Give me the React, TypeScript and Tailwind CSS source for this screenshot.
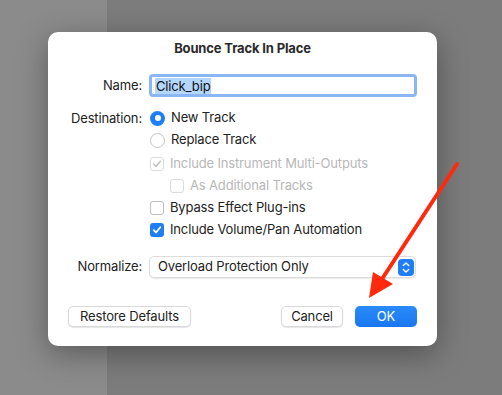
import React from 'react'

const font = { fontFamily: 'Inter, "Liberation Sans", sans-serif' }

function Radio({ checked }: { checked?: boolean }) {
  if (checked) {
    return (
      <span className="w-[15px] h-[15px] rounded-full bg-[#1f7ef5] flex items-center justify-center shrink-0">
        <span className="w-[6px] h-[6px] rounded-full bg-white" />
      </span>
    )
  }
  return <span className="w-[15px] h-[15px] rounded-full bg-white border border-[#c4c4c4] shrink-0" />
}

function Check({ checked, disabled }: { checked?: boolean; disabled?: boolean }) {
  if (checked && !disabled) {
    return (
      <span className="w-[14px] h-[14px] rounded-[3px] bg-[#1f7ef5] flex items-center justify-center shrink-0">
        <svg width="10" height="10" viewBox="0 0 10 10">
          <path d="M1.8 5.2 L4 7.5 L8.3 2.3" fill="none" stroke="white" strokeWidth="1.8" strokeLinecap="round" strokeLinejoin="round" />
        </svg>
      </span>
    )
  }
  return (
    <span
      className={`w-[14px] h-[14px] rounded-[3px] bg-white border flex items-center justify-center shrink-0 ${
        disabled ? 'border-[#dcdcdc]' : 'border-[#bdbdbd]'
      }`}
    >
      {checked && (
        <svg width="10" height="10" viewBox="0 0 10 10">
          <path d="M1.8 5.2 L4 7.5 L8.3 2.3" fill="none" stroke="#c2c2c2" strokeWidth="1.6" strokeLinecap="round" strokeLinejoin="round" />
        </svg>
      )}
    </span>
  )
}

function Option({ control, label, disabled }: { control: React.ReactNode; label: string; disabled?: boolean }) {
  return (
    <div className="flex items-center gap-[6px] h-[22px]">
      {control}
      <span className={disabled ? 'text-[#b8b8b8]' : 'text-[#222]'}>{label}</span>
    </div>
  )
}

export default function App() {
  return (
    <div className="w-[502px] h-[395px] relative overflow-hidden flex text-[13px] tracking-[-0.15px]" style={font}>
      <div className="w-[107px] h-full bg-[#8b8b8b]" />
      <div className="flex-1 h-full bg-[#7c7c7c]" />

      {/* dialog window */}
      <div className="absolute left-[48px] top-[32px] w-[389px] h-[314px] bg-white rounded-[10px] shadow-[0_8px_30px_rgba(0,0,0,0.35)] flex flex-col">
        <div className="h-[26px] flex items-end justify-center font-bold text-[#2a2a2a]">Bounce Track In Place</div>

        <div className="grid grid-cols-[94px_1fr] gap-x-[7px] pr-[20px] mt-[16px]">
          <div className="text-right text-[#222] flex items-center justify-end h-[23px]">Name:</div>
          <div className="h-[23px] rounded-[4px] border-[3px] border-[#8ab6f3] bg-white flex items-center pl-[3px]">
            <span className="bg-[#b3d7ff] text-[#111] px-[1px] leading-[16px]">Click_bip</span>
          </div>

          <div className="text-right text-[#222] flex items-start justify-end h-[22px] pt-[2px] mt-[10px]">Destination:</div>
          <div className="flex flex-col mt-[10px] pl-[1px]">
            <Option control={<Radio checked />} label="New Track" />
            <Option control={<Radio />} label="Replace Track" />
            <div className="h-[2px]" />
            <Option control={<Check checked disabled />} label="Include Instrument Multi-Outputs" disabled />
            <div className="pl-[20px]">
              <Option control={<Check disabled />} label="As Additional Tracks" disabled />
            </div>
            <Option control={<Check />} label="Bypass Effect Plug-ins" />
            <Option control={<Check checked />} label="Include Volume/Pan Automation" />
          </div>

          <div className="text-right text-[#222] flex items-center justify-end h-[22px] mt-[15px]">Normalize:</div>
          <div className="h-[22px] mt-[15px] mr-[1px] rounded-[5px] border border-[#dcdcdc] shadow-[0_1px_1px_rgba(0,0,0,0.08)] flex items-center pl-[8px] pr-[1px]">
            <span className="flex-1 text-[#222]">Overload Protection Only</span>
            <span className="w-[16px] h-[17px] rounded-[4px] bg-[#1f7ef5] flex items-center justify-center">
              <svg width="10" height="13" viewBox="0 0 10 13">
                <path d="M2.3 4.6 L5 2 L7.7 4.6 M2.3 8.4 L5 11 L7.7 8.4" fill="none" stroke="white" strokeWidth="1.4" strokeLinecap="round" strokeLinejoin="round" />
              </svg>
            </span>
          </div>
        </div>

        <div className="flex items-center px-[20px] mt-[28px]">
          <button className="h-[21px] px-[11px] rounded-[5px] bg-white border border-[#d8d8d8] shadow-[0_1px_1px_rgba(0,0,0,0.1)] text-[#222]">
            Restore Defaults
          </button>
          <div className="flex-1" />
          <button className="h-[21px] w-[62px] rounded-[5px] bg-white border border-[#d8d8d8] shadow-[0_1px_1px_rgba(0,0,0,0.1)] text-[#222]">
            Cancel
          </button>
          <button className="h-[21px] w-[62px] ml-[12px] rounded-[5px] bg-gradient-to-b from-[#2b8bfa] to-[#1877f0] text-white">
            OK
          </button>
        </div>
      </div>

      {/* red annotation arrow */}
      <svg className="absolute left-0 top-0" width="502" height="395" viewBox="0 0 502 395">
        <line x1="457" y1="164" x2="382" y2="279" stroke="#ff2a0d" strokeWidth="4" strokeLinecap="round" />
        <polygon points="369,298 373,272 393,284" fill="#ff2a0d" />
      </svg>
    </div>
  )
}
